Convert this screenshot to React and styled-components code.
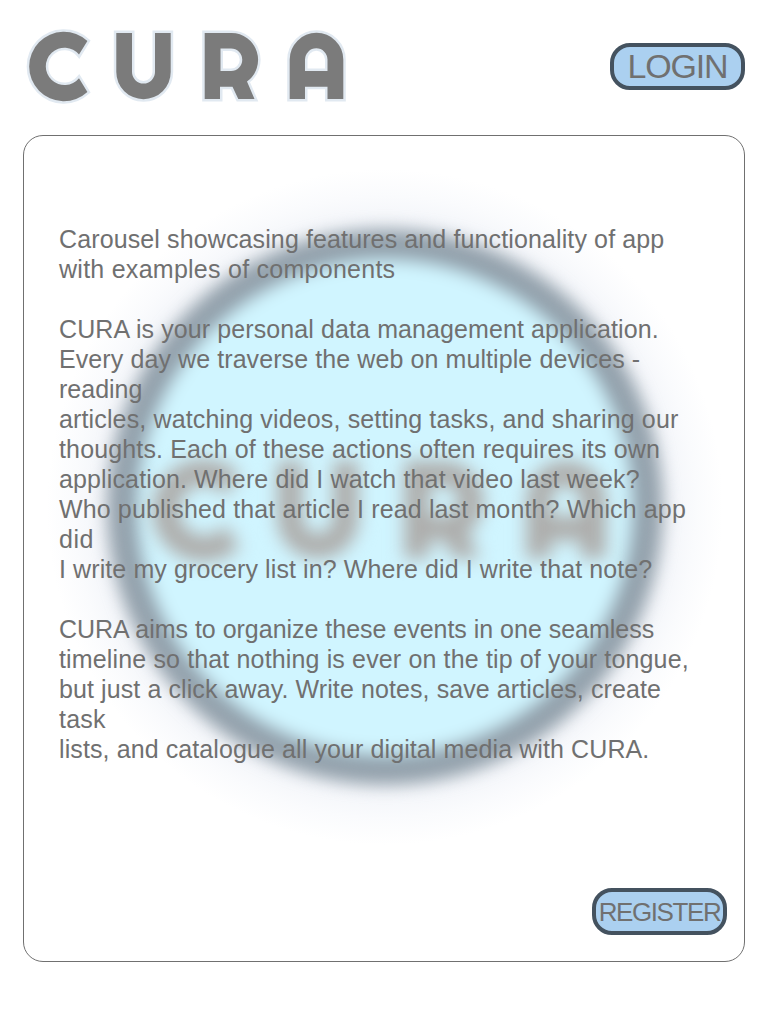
import React from "react";
import styled, { createGlobalStyle } from "styled-components";

const GlobalStyle = createGlobalStyle`
  * { box-sizing: border-box; }
  body { margin: 0; background: #fff; color: #707070; font-family: "Liberation Sans", Arial, sans-serif; }
`;

const Page = styled.div`
  height: 1024px;
  display: flex;
  flex-direction: column;
  padding: 24px 23px 62px;
`;

const Header = styled.header`
  height: 111px;
  flex: none;
  display: flex;
  justify-content: space-between;
  align-items: flex-start;
`;

const Logo = styled.svg`
  width: 330px;
  height: 84px;
  display: block;
`;

const Button = styled.button`
  position: relative;
  width: 135px;
  height: 47px;
  margin: ${(p) => p.$margin || "0"};
  padding: 0 0 ${(p) => p.$lift || 0}px;
  flex: none;
  display: flex;
  align-items: center;
  justify-content: center;
  border: 4px solid #44525f;
  border-radius: 20px;
  background: #abd0f0;
  color: #707070;
  font-family: inherit;
  font-size: ${(p) => p.$size}px;
  letter-spacing: ${(p) => p.$tracking || 0}px;
  line-height: 1;
  white-space: nowrap;
`;

const Panel = styled.main`
  position: relative;
  flex: 1;
  display: flex;
  flex-direction: column;
  justify-content: space-between;
  align-items: flex-end;
  padding: 88px 17px 26px 35px;
  border: 1px solid #707070;
  border-radius: 20px;
`;

const Emblem = styled.svg`
  position: absolute;
  left: 0;
  top: 0;
  width: 720px;
  height: 825px;
`;

const Copy = styled.div`
  position: relative;
  align-self: stretch;
  font-size: 25px;
  line-height: 30px;
`;

const Paragraph = styled.p`
  margin: 0 0 30px;
`;

const Line = styled.span`
  display: block;
  width: max-content;
  white-space: pre;
  letter-spacing: ${(p) => p.$tracking || 0}px;
`;

const PARAGRAPHS = [
  [
    ["Carousel showcasing features and functionality of app", 0.12],
    ["with examples of components", 0.26],
  ],
  [
    ["CURA is your personal data management application.", 0.1],
    ["Every day we traverse the web on multiple devices -", 0.09],
    ["reading", 0],
    ["articles, watching videos, setting tasks, and sharing our", 0.14],
    ["thoughts. Each of these actions often requires its own", 0.14],
    ["application. Where did I watch that video last week?", 0.13],
    ["Who published that article I read last month? Which app", 0.13],
    ["did", 0.5],
    ["I write my grocery list in? Where did I write that note?", 0.1],
  ],
  [
    ["CURA aims to organize these events in one seamless", -0.02],
    ["timeline so that nothing is ever on the tip of your tongue,", 0.145],
    ["but just a click away. Write notes, save articles, create", 0.095],
    ["task", 0.2],
    ["lists, and catalogue all your digital media with CURA.", 0.1],
  ],
];

const LETTERS = [
  "M87.4 41 A34.7 34.7 0 1 0 87.4 92 L79 78.2 A18.7 18.7 0 1 1 79 54.6 Z",
  "M116.3 33 H132 V72 A11.5 11.5 0 0 0 155 72 V33 H170.7 V72 A27.2 27.2 0 0 1 116.3 72 Z",
  "M204.7 33 H231.6 A26.8 26.8 0 0 1 247 81.5 L254.5 99 H238.3 L232.5 86.7 H220 V99 H204.7 Z M220.5 48.5 V71 H231 A11.25 11.25 0 0 0 231 48.5 Z",
  "M289.7 99 V59.6 A26.8 26.8 0 0 1 343.3 59.6 V99 H327.5 V86.7 H305 V99 Z M305 71 H327.5 V59.6 A11.25 11.25 0 0 0 305 59.6 Z",
];

function Wordmark({ fill, outline }) {
  return (
    <g fill={fill} fillRule="evenodd">
      <path d={LETTERS.join(" ")} fill="none" stroke={outline} strokeWidth="5" />
      <path d={LETTERS.join(" ")} />
    </g>
  );
}

export default function App() {
  return (
    <>
      <GlobalStyle />
      <Page>
        <Header>
          <Logo viewBox="23 24 330 84" aria-label="CURA">
            <Wordmark fill="#7b7b7b" outline="#e1e9f1" />
          </Logo>
          <Button $size={34} $tracking={-1.2} $lift={2} $margin="19px 0 0">LOGIN</Button>
        </Header>
        <Panel>
          <Emblem viewBox="24 136 720 825" aria-hidden="true">
            <defs>
              <radialGradient id="halo" cx="385" cy="507" r="338" gradientUnits="userSpaceOnUse">
                <stop offset="0.8" stopColor="#e9edf2" />
                <stop offset="0.85" stopColor="#f4f6fa" />
                <stop offset="0.92" stopColor="#fafbfd" />
                <stop offset="1" stopColor="#ffffff" />
              </radialGradient>
              <filter id="soft" x="-20%" y="-20%" width="140%" height="140%" colorInterpolationFilters="sRGB">
                <feGaussianBlur stdDeviation="8.5" />
              </filter>
            </defs>
            <circle cx="385" cy="507" r="338" fill="url(#halo)" />
            <g filter="url(#soft)">
              <circle cx="385" cy="507" r="262.5" fill="#d0f5ff" stroke="#919faa" strokeWidth="29" />
            </g>
            <g filter="url(#soft)">
              <g transform="translate(112 415) scale(1.435)">
                <Wordmark fill="#adadac" outline="#c8d9dd" />
              </g>
            </g>
          </Emblem>
          <Copy>
            {PARAGRAPHS.map((lines, i) => (
              <Paragraph key={i}>
                {lines.map(([text, tracking]) => (
                  <Line key={text} $tracking={tracking}>{text}</Line>
                ))}
              </Paragraph>
            ))}
          </Copy>
          <Button $size={26} $tracking={-1.4}>REGISTER</Button>
        </Panel>
      </Page>
    </>
  );
}
